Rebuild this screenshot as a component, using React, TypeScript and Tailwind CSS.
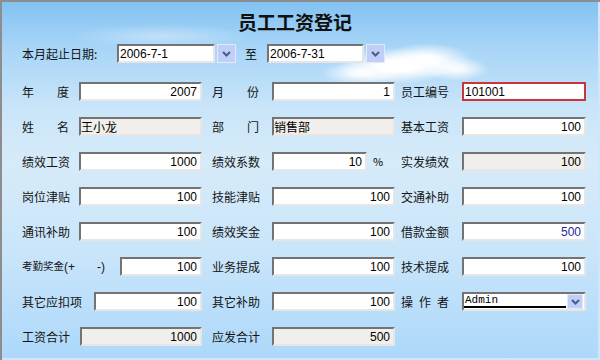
import clsx from "clsx";

const cjk = "font-['Noto_Sans_CJK_SC','Noto_Sans',sans-serif]";
const num = "font-['Liberation_Sans',Arial,sans-serif]";

function Label({ text, w, spread }: { text: string; w: string; spread?: string }) {
  return (
    <div className={clsx(w, "shrink-0 text-[12px] leading-none text-[#141414]")}>
      {spread ? (
        <span className={clsx(spread, "flex justify-between")}>
          {text.split("").map((c, i) => (
            <span key={i}>{c}</span>
          ))}
        </span>
      ) : (
        text
      )}
    </div>
  );
}

function Box({
  value,
  readOnly,
  left,
  red,
  blue,
  w,
}: {
  value?: string;
  readOnly?: boolean;
  left?: boolean;
  red?: boolean;
  blue?: boolean;
  w?: string;
}) {
  return (
    <div
      className={clsx(
        w ?? "flex-1",
        "h-[19px] flex items-center border-2 text-[12px] leading-none",
        num,
        red
          ? "border-[#c8363a]"
          : "border-t-[#737373] border-l-[#737373] border-r-[#e6e6e6] border-b-[#e6e6e6]",
        readOnly ? "bg-[#f0efeb]" : "bg-white",
        left ? "justify-start pl-[1px]" : "justify-end pr-[3px]",
        blue ? "text-[#1c2a9c]" : "text-black"
      )}
    >
      {value}
    </div>
  );
}

function DropBtn() {
  return (
    <div className="w-[19px] h-[19px] shrink-0 flex items-center justify-center border border-[#e2e9f8] bg-[#bfcff6]">
      <svg width="9" height="6" viewBox="0 0 9 6">
        <path d="M1 1l3.5 3.5L8 1" stroke="#4a5c8e" strokeWidth="2" fill="none" />
      </svg>
    </div>
  );
}

function Row({ children }: { children: React.ReactNode }) {
  return <div className="flex items-center h-[35px]">{children}</div>;
}

function C1({ children }: { children: React.ReactNode }) {
  return <div className="w-[180px] mr-[10px] shrink-0 flex items-center">{children}</div>;
}
function C2({ children }: { children: React.ReactNode }) {
  return <div className="w-[183px] mr-[6px] shrink-0 flex items-center">{children}</div>;
}
function C3({ children }: { children: React.ReactNode }) {
  return <div className="w-[185px] shrink-0 flex items-center">{children}</div>;
}

export default function App() {
  return (
    <div
      className={clsx(
        "w-[600px] h-[360px] overflow-hidden border-l-2 border-t-2 border-[#8d8d8d]",
        "bg-[image:radial-gradient(58px_18px_at_395px_64px,rgba(255,255,255,1)_30%,rgba(255,255,255,0)),radial-gradient(46px_17px_at_425px_58px,rgba(255,255,255,0.95)_25%,rgba(255,255,255,0)),radial-gradient(40px_12px_at_360px_71px,rgba(255,255,255,0.9)_20%,rgba(255,255,255,0)),radial-gradient(32px_12px_at_455px_67px,rgba(255,255,255,0.85)_20%,rgba(255,255,255,0)),radial-gradient(90px_12px_at_160px_34px,rgba(255,255,255,0.35),rgba(255,255,255,0)),linear-gradient(180deg,#82c2f2_0%,#a6d4f7_12%,#cae5f9_30%,#d6ebf9_45%,#c9e5fa_70%,#acd8fa_100%)]",
        cjk
      )}
    >
      <div className="h-full border-r-2 border-b-2 border-[#cfe6fb]">
        <div className="h-[34px] pt-[6px] flex justify-center pr-[10px]">
          <h1 className="text-[19px] leading-[28px] font-bold text-[#101010]">员工工资登记</h1>
        </div>

        <div className="pl-[20px]">
          <div className="flex items-center h-[35px]">
            <Label text="本月起止日期:" w="w-[95px]" />
            <Box value="2006-7-1" left w="w-[98px]" />
            <div className="ml-[2px]">
              <DropBtn />
            </div>
            <div className="ml-[9px] w-[22px] text-[12px] leading-none">至</div>
            <Box value="2006-7-31" left w="w-[97px]" />
            <div className="ml-[2px]">
              <DropBtn />
            </div>
          </div>

          <div className="mt-[3px]">
            <Row>
              <C1>
                <Label text="年度" w="w-[57px]" spread="w-[47px]" />
                <Box value="2007" />
              </C1>
              <C2>
                <Label text="月份" w="w-[60px]" spread="w-[47px]" />
                <Box value="1" />
              </C2>
              <C3>
                <Label text="员工编号" w="w-[61px]" />
                <Box value="101001" left red />
              </C3>
            </Row>

            <Row>
              <C1>
                <Label text="姓名" w="w-[57px]" spread="w-[47px]" />
                <div className="flex-1 h-[19px] flex items-center border-2 border-t-[#737373] border-l-[#737373] border-r-[#e6e6e6] border-b-[#e6e6e6] bg-[#f0efeb] text-[12px] leading-none">
                  王小龙
                </div>
              </C1>
              <C2>
                <Label text="部门" w="w-[60px]" spread="w-[47px]" />
                <div className="flex-1 h-[19px] flex items-center border-2 border-t-[#737373] border-l-[#737373] border-r-[#e6e6e6] border-b-[#e6e6e6] bg-[#f0efeb] text-[12px] leading-none">
                  销售部
                </div>
              </C2>
              <C3>
                <Label text="基本工资" w="w-[61px]" />
                <Box value="100" />
              </C3>
            </Row>

            <Row>
              <C1>
                <Label text="绩效工资" w="w-[57px]" />
                <Box value="1000" />
              </C1>
              <C2>
                <Label text="绩效系数" w="w-[60px]" />
                <Box value="10" w="w-[95px]" />
                <span className="ml-[6px] text-[11px] leading-none">%</span>
              </C2>
              <C3>
                <Label text="实发绩效" w="w-[61px]" />
                <Box value="100" readOnly />
              </C3>
            </Row>

            <Row>
              <C1>
                <Label text="岗位津贴" w="w-[57px]" />
                <Box value="100" />
              </C1>
              <C2>
                <Label text="技能津贴" w="w-[60px]" />
                <Box value="100" />
              </C2>
              <C3>
                <Label text="交通补助" w="w-[61px]" />
                <Box value="100" />
              </C3>
            </Row>

            <Row>
              <C1>
                <Label text="通讯补助" w="w-[57px]" />
                <Box value="100" />
              </C1>
              <C2>
                <Label text="绩效奖金" w="w-[60px]" />
                <Box value="100" />
              </C2>
              <C3>
                <Label text="借款金额" w="w-[61px]" />
                <Box value="500" blue />
              </C3>
            </Row>

            <Row>
              <C1>
                <div className="w-[98px] shrink-0 flex items-center leading-none text-[#141414]">
                  <span className="text-[10.5px]">考勤奖金</span>
                  <span className={clsx(num, "text-[12px]")}>(+</span>
                  <span className={clsx(num, "text-[12px] ml-[22px]")}>-)</span>
                </div>
                <Box value="100" />
              </C1>
              <C2>
                <Label text="业务提成" w="w-[60px]" />
                <Box value="100" />
              </C2>
              <C3>
                <Label text="技术提成" w="w-[61px]" />
                <Box value="100" />
              </C3>
            </Row>

            <Row>
              <C1>
                <Label text="其它应扣项" w="w-[72px]" />
                <Box value="100" />
              </C1>
              <C2>
                <Label text="其它补助" w="w-[60px]" />
                <Box value="100" />
              </C2>
              <C3>
                <Label text="操作者" w="w-[61px]" spread="w-[48px]" />
                <div className="flex-1 h-[19px] flex items-center border-2 border-t-[#737373] border-l-[#737373] border-r-[#e6e6e6] border-b-[#e6e6e6] bg-white">
                  <div className="flex-1 h-full flex flex-col justify-end pb-[1px]">
                    <span className="font-['Liberation_Mono',monospace] text-[11px] leading-[12px] pl-[1px]">Admin</span>
                    <div className="h-[2px] w-[102px] bg-black" />
                  </div>
                  <div className="w-[16px] h-[15px] mr-[1px] flex items-center justify-center border border-[#e2e9f8] bg-[#bfcff6]">
                    <svg width="9" height="6" viewBox="0 0 9 6">
                      <path d="M1 1l3.5 3.5L8 1" stroke="#4a5c8e" strokeWidth="2" fill="none" />
                    </svg>
                  </div>
                </div>
              </C3>
            </Row>

            <Row>
              <C1>
                <Label text="工资合计" w="w-[58px]" />
                <Box value="1000" readOnly />
              </C1>
              <C2>
                <Label text="应发合计" w="w-[60px]" />
                <Box value="500" readOnly />
              </C2>
            </Row>
          </div>
        </div>
      </div>
    </div>
  );
}
